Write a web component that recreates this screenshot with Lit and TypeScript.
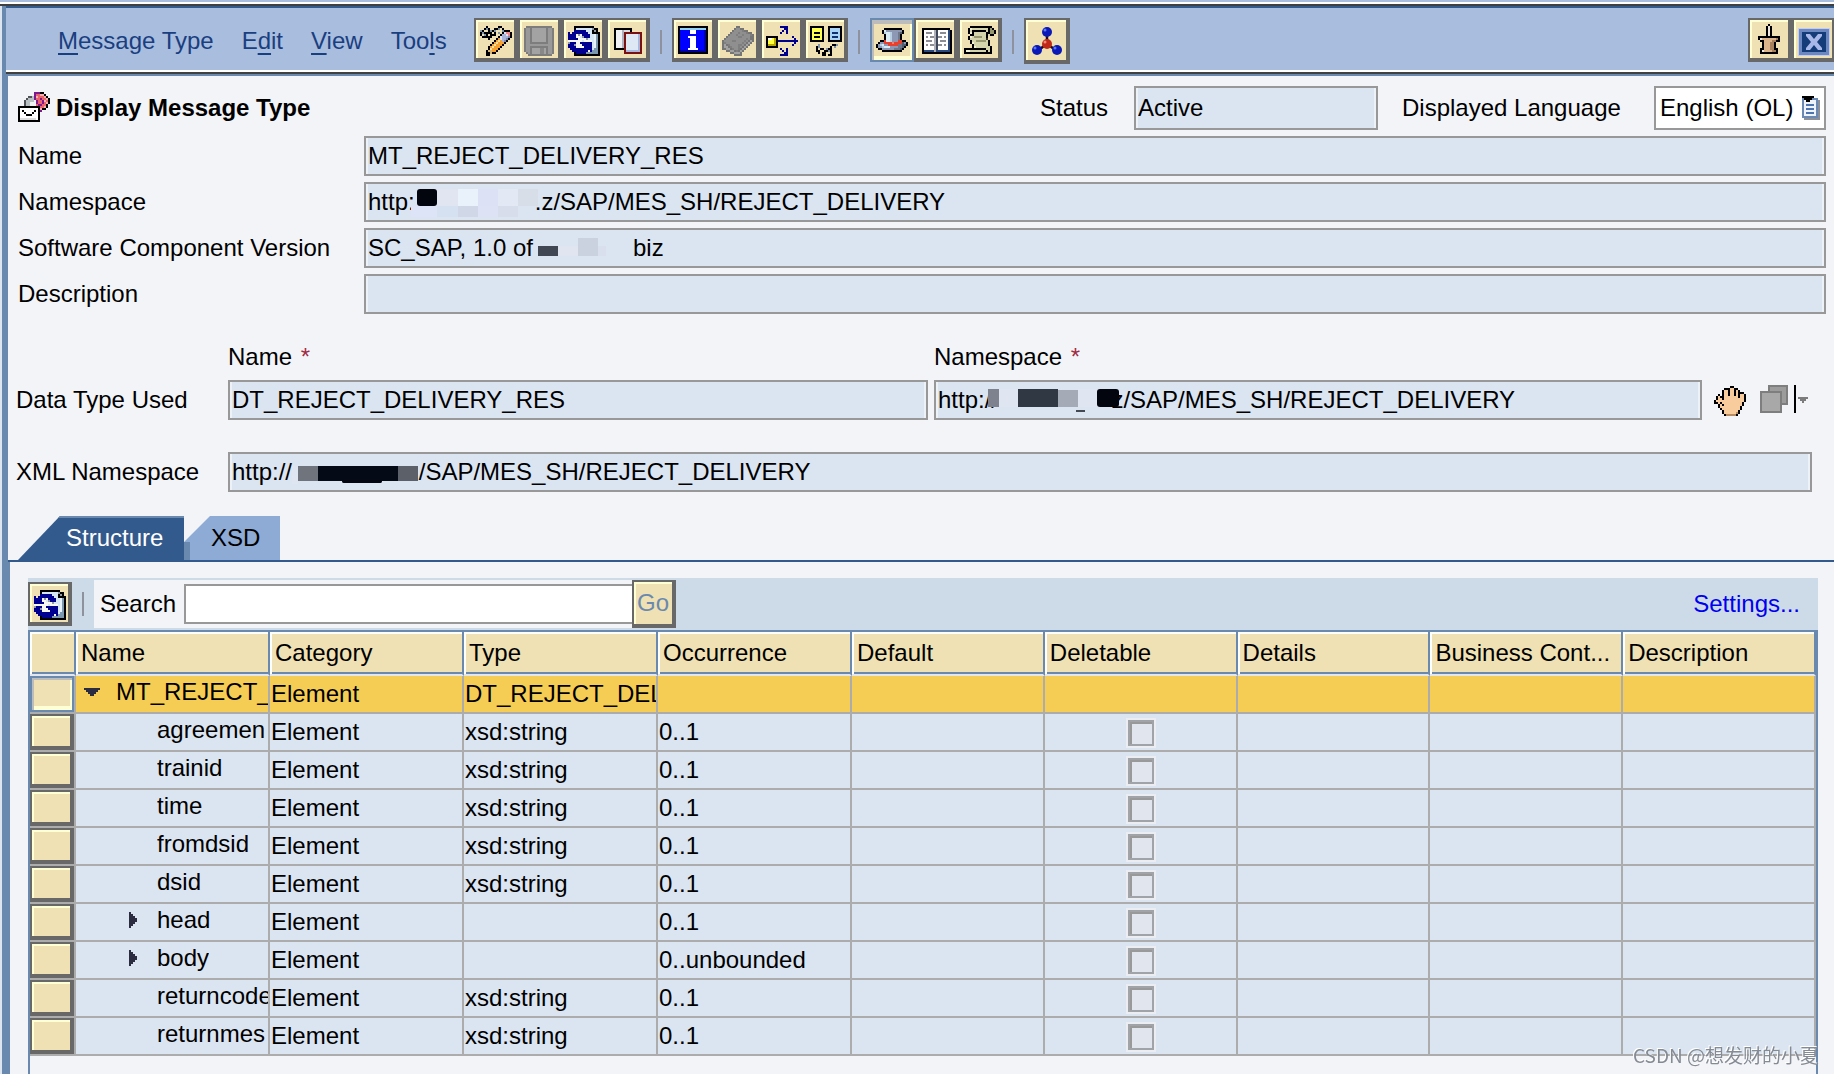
import { LitElement, html, svg, css, nothing, TemplateResult } from "lit";
import { customElement, state } from "lit/decorators.js";

type Palette = Record<string, string>;

/* Turns rows of palette letters into runs of square cells. */
const cells = (rows: string[], palette: Palette) => {
  const out: TemplateResult[] = [];
  rows.forEach((row, y) => {
    let x = 0;
    while (x < row.length) {
      const c = row[x];
      let n = 1;
      while (row[x + n] === c) n++;
      if (palette[c]) out.push(svg`<rect x=${x} y=${y} width=${n} height="1" fill=${palette[c]}></rect>`);
      x += n;
    }
  });
  return out;
};

const pix = (body: unknown, w = 16, h = 16) => html`<svg
  class="pix" width=${w * 2} height=${h * 2} viewBox="0 0 ${w} ${h}" aria-hidden="true">${body}</svg>`;

const K = "#000000";

const icons: Record<string, () => TemplateResult> = {
  edit: () => pix(cells([
    "................",
    "...K.....KK.....",
    "..KgK..KKg.K....",
    "gK..KgKg...gKKK.",
    "KgKKKK.K.g.KwPPK",
    "K.gK.KKK..KsswPK",
    ".KKKKK...KwsssbK",
    "....K...KOwssbK.",
    ".......KOyOsbK..",
    "......KOyOOOK...",
    ".....KOyOOOK....",
    "....KOyOOOK.....",
    "....KyOOOK......",
    "...KeeOOK.......",
    "...KKeKK........",
    "...KK...........",
  ], { K, g: "#7d93ab", P: "#f2868a", w: "#dfe4f5", s: "#aab4d8", b: "#7d88b4", O: "#f5a032", y: "#ffe0a0", e: "#d8b878" })),

  save: () => pix(svg`
    <path d="M1 1H14V2H15V15H14V16H2V15H1V14H0V2H1Z" fill="#7d7d7d"></path>
    <path d="M1 2H3V10H12V2H14V15H12V11H3V15H2V14H1Z" fill="#999999"></path>
    <rect x="4" y="2" width="7" height="7" fill="#a3a3a3"></rect>
    <rect x="4" y="12" width="7" height="3" fill="#a3a3a3"></rect>
    <rect x="8" y="12" width="2" height="3" fill="#888888"></rect>`),

  refresh: () => pix(cells([
    "................",
    "...KKKKKKKKKK...",
    "...KLLLLLLLLgKK.",
    "...NNNNNNLLLKgK.",
    "N.NNNNNNNNLLKKKK",
    "NNNNWgWNNNNLLwbK",
    "NNNNWWLgNNNLLwbK",
    "NNNNNWWWWgLLLwbK",
    "WWWWWWWLWWWWLwbK",
    "gNNNWWNNNNNNLwbK",
    "NNNgWWWNNNNNLwbK",
    "NNNNWWWWNNNNLwbK",
    ".NNNNNNNNNNNLbbK",
    "..NNNNNNNNWNbbbK",
    "...KNNNNNbbbbbbK",
    "...KKKKKKKKKKKKK",
  ], { K, L: "#d5e6f6", g: "#8f9aa6", N: "#000090", W: "#f6f6f2", w: "#e8f0f8", b: "#7c97b0" })),

  copy: () => pix(svg`
    <rect x="1" y="2" width="9" height="11" fill="#000"></rect>
    <rect x="2" y="3" width="7" height="9" fill="#dcdce6"></rect>
    <rect x="2" y="3" width="3" height="9" fill="#f0f0f4"></rect>
    <rect x="5" y="3" width="1" height="9" fill="#b0b0c0"></rect>
    <rect x="6" y="4" width="9" height="11" fill="#7b1010"></rect>
    <rect x="7" y="5" width="7" height="9" fill="#a9b8dc"></rect>
    <rect x="7" y="5" width="6" height="8" fill="#dde8f4"></rect>`),

  info: () => pix(svg`
    <rect x="0" y="1" width="15" height="14" fill="#000"></rect>
    <rect x="1" y="2" width="13" height="1" fill="#8fd4f6"></rect>
    <rect x="1" y="3" width="13" height="11" fill="#0000a0"></rect>
    <rect x="1" y="3" width="12" height="10" fill="#0000ff"></rect>
    <path d="M6 3H9V5H6Z M5 6H9V12H10V13H5V12H6V7H5Z" fill="#fff"></path>`),

  book: () => pix(cells([
    "................",
    ".......dd.......",
    "......dggdd.....",
    ".....dggggmdd...",
    "....dgggmgggmdd.",
    "...dgggmggmgggmd",
    "..dgggggmmggggdd",
    ".dggggggggggmgdd",
    "dggggmmggggmgdld",
    "dmggggggggmgdld.",
    "dldmggggmmgdld..",
    "dlldmgggmgdld...",
    "ddlldmggmdld....",
    "..ddlldmdld.....",
    "....ddllld......",
    "......dddd......",
  ], { d: "#757575", g: "#8f8f8f", m: "#7f7f7f", l: "#a2a2a2" })),

  where: () => pix(svg`
    <rect x="0" y="6" width="6" height="6" fill="#000"></rect>
    <rect x="1" y="7" width="4" height="4" fill="#b8a800"></rect>
    <rect x="1" y="7" width="3" height="3" fill="#ffff3c"></rect>
    <rect x="1" y="7" width="2" height="1" fill="#fff"></rect>
    <path d="M6 8H16V9H6Z M13 6H14V7H15V8H16V9H15V10H14V11H13V10H14V9H13V8H14V7H13Z
      M7 1H11V5H10V3H9V4H8V5H7V4H8V3H9V2H7Z
      M7 12H8V13H9V14H10V12H11V16H7V15H9V14H8V13H7Z" fill="#000090"></path>`),

  compare: () => pix(svg`
    <rect x="0" y="1" width="7" height="8" fill="#000"></rect>
    <rect x="1" y="2" width="5" height="6" fill="#ffff50"></rect>
    <path d="M2 4H5V5H2Z M2 6H5V7H2Z" fill="#000"></path>
    <rect x="9" y="1" width="7" height="8" fill="#000"></rect>
    <rect x="10" y="2" width="5" height="6" fill="#a8d4f8"></rect>
    <path d="M11 4H14V5H11Z M11 6H14V7H11Z" fill="#103070"></path>
    ${cells([
      "................", "................", "................", "................",
      "................", "................", "................", "................",
      "................", "................",
      "....g......KKg..", "...Kg.....K.g...", "...K.KK.gKK.....",
      "...KK..KKgK.....", "....K.KK..K.....", "......KK.KK.....",
    ], { K, g: "#7d93ab" })}`),

  hat: () => pix(cells([
    "................",
    "................",
    "....KKKKKKKKK...",
    "...KwggggggggK..",
    "...KbwwbgggdsK..",
    "....KwwbgggdK...",
    "....KwwbgggdK...",
    "....KwwbgggdK...",
    "..KKRwwbgggRRKK.",
    ".KggRRRRrRRRRsgK",
    "KgbwggRRRRRddssK",
    "KggbwwwggggddsK.",
    ".KKggggggdddsK..",
    "...KKKKKKKKKK...",
  ], { K, w: "#d8ecf6", b: "#b8d0e4", g: "#8c98b4", d: "#70788c", s: "#525c70", R: "#e8402c", r: "#f08070" })),

  pages: () => pix(svg`
    <path d="M1 2H15V3H16V15H1Z" fill="#000"></path>
    <rect x="14" y="3" width="1" height="11" fill="#284880"></rect>
    <rect x="2" y="13" width="12" height="1" fill="#284880"></rect>
    <rect x="2" y="3" width="12" height="10" fill="#fff"></rect>
    <rect x="7" y="3" width="1" height="11" fill="#b0b0b8"></rect>
    <rect x="8" y="3" width="1" height="10" fill="#40485c"></rect>
    <path d="M3 4H6V5H3Z M3 6H4V7H3Z M5 6H7V7H5Z M3 8H6V9H3Z M3 10H4V11H3Z M5 10H7V11H5Z
      M10 4H13V5H10Z M9 6H11V7H9Z M12 6H13V7H12Z M10 8H13V9H10Z M9 10H11V11H9Z M12 10H13V11H12Z" fill="#8c8c94"></path>`),

  scroll: () => pix(cells([
    "................",
    "...KKKKKKKKKKK..",
    "..KwllllllllKdK.",
    "..KlKKKKKKKlKddK",
    "..KwKllllllKKddK",
    "...KKllllllKlKK.",
    "..KwlddddllK....",
    "..Kllllllllk....",
    "...KlldddddlK...",
    "...KwlllllllK...",
    "....KlllllllK...",
    "....KwlllllllK..",
    "KKKKKKKKKKKllK..",
    "KwwllllllllKlK..",
    "KKKKKKKKKKKKKK..",
    "................",
  ], { K, k: "#2c2c20", w: "#f2f2d4", l: "#d4d4ac", d: "#989870" })),

  molecule: () => html`<svg width="32" height="32" viewBox="0 0 32 32" aria-hidden="true">
    <path d="M16 7V19L6 26M16 19L26 26" stroke="#181010" stroke-width="2.5" fill="none"></path>
    <g fill="#0a18b8"><circle cx="16" cy="7" r="5"></circle><circle cx="6" cy="25" r="5"></circle><circle cx="26" cy="25" r="5"></circle></g>
    <g fill="#5c78f0"><circle cx="14" cy="5" r="1.5"></circle><circle cx="4" cy="23" r="1.5"></circle><circle cx="24" cy="23" r="1.5"></circle></g>
    <circle cx="16" cy="19" r="5" fill="#c02818"></circle><circle cx="14" cy="17" r="1.5" fill="#f08878"></circle></svg>`,

  pin: () => pix(cells([
    ".......K........",
    "......KwK.......",
    "......KwK.......",
    "......KwK.......",
    "......KwK.......",
    "......KwK.......",
    "..KKKKKKKKKKK...",
    "..KwtttttttbK...",
    "...KKttttbbKK...",
    "....KtttbbK.....",
    "....KtttbbK.....",
    "....KtttbbK.....",
    "...KKtttbbKK....",
    "...KwttttbbK....",
    "...KKKKKKKKK....",
  ], { K, w: "#f0e8e0", t: "#dcb48c", b: "#a8825c" })),

  close: () => html`<svg width="32" height="32" viewBox="0 0 32 32" aria-hidden="true">
    <rect x="0" y="4" width="32" height="28" fill="#c4ccf4"></rect>
    <rect x="1" y="5" width="30" height="26" fill="#6c88c0"></rect>
    <rect x="4" y="8" width="24" height="20" fill="#143c78"></rect>
    <path d="M8 10h4l4 5l4-5h4v2l-5 6l5 6v2h-4l-4-5l-4 5h-4v-2l5-6l-5-6z" fill="#a8b8e8"></path></svg>`,

  message: () => pix(cells([
    "........PPPKK...",
    "........PRRrrK..",
    ".....ggLPrRRRrK.",
    "....gLLLPRRPRRrK",
    "...gLLLLWPRRPrRK",
    "...gLLWWWPRRPRrK",
    "...gLLWWWRPPRRK.",
    "KKKKKKKKKKKRRrK.",
    "KwwwwwwwwwKrKK..",
    "KwKwwwwwKwKP....",
    "KwwKwwwKwwK.....",
    "KwwwKKKwwwK.....",
    "KwwwwwwwwwK.....",
    "KccccccccwK.....",
    "KKKKKKKKKKK.....",
  ], { K, P: "#7c1890", R: "#e86468", r: "#f4b0b0", g: "#505458", L: "#b8c0c4", W: "#eef2f2", w: "#ffffff", c: "#dcdcdc" })),

  hand: () => pix(cells([
    "................",
    "........KK......",
    ".....KKKppKK....",
    "....KppKppKpK...",
    "....KppKppKpKKK.",
    "..K.KppKppKpKppK",
    ".KpKKpppppppKppK",
    ".KppKppppppppppK",
    "KppppppppppppppK",
    "KKpKppppppppppK.",
    "..KpKpppppppppK.",
    "..KppppppppppK..",
    "...KpppppppppK..",
    "....KpppppppK...",
    "....KppppppbK...",
    ".....KbbbbbK....",
  ], { K, p: "#f8cc9c", b: "#b88c60" })),

  stack: () => html`<svg class="pix" width="48" height="30" viewBox="0 0 48 30" aria-hidden="true">
    <rect x="8" y="0" width="20" height="20" fill="#7e7e7e"></rect><rect x="10" y="2" width="16" height="16" fill="#9c9c9c"></rect>
    <rect x="0" y="6" width="22" height="22" fill="#7e7e7e"></rect><rect x="2" y="8" width="18" height="18" fill="#a8a8a8"></rect>
    <rect x="34" y="0" width="2" height="28" fill="#000"></rect>
    <path d="M38 12H48V14H46V16H44V18H42V16H40V14H38Z" fill="#7c7c7c"></path></svg>`,

  list: () => html`<svg class="pix" width="20" height="24" viewBox="0 0 20 24" aria-hidden="true">
    <rect x="4" y="4" width="16" height="20" fill="#8c9098"></rect>
    <rect x="2" y="2" width="16" height="20" fill="#6a89b4"></rect>
    <rect x="4" y="4" width="12" height="16" fill="#f0f4fa"></rect>
    <path d="M6 8H14V10H6Z M6 12H14V14H6Z M6 16H14V18H6Z" fill="#4c74b0"></path>
    <path d="M2 0H14V2H12V4H10V6H6V4H4V2H2Z" fill="#000"></path></svg>`,
};

/* Redaction blocks: x, y, width, height, colour, in the field's own pixels. */
type Block = [number, number, number, number, string];
const redact = (blocks: Block[]) => html`<svg class="redact" width="240" height="36" viewBox="0 0 240 36" aria-hidden="true">
  ${blocks.map(([x, y, w, h, f]) => svg`<rect x=${x} y=${y} width=${w} height=${h} rx=${f === "#02040e" ? 3 : 0} fill=${f}></rect>`)}</svg>`;

const gap = (n: number) => " ".repeat(n);

const general: { label: string; id: string; value: string; blocks?: Block[] }[] = [
  { label: "Name", id: "name", value: "MT_REJECT_DELIVERY_RES" },
  {
    label: "Namespace", id: "ns", value: `http:${gap(18)}.z/SAP/MES_SH/REJECT_DELIVERY`,
    blocks: [
      [45, 22, 26, 11, "#dde4f7"], [51, 5, 20, 17, "#02040e"], [71, 5, 21, 17, "#e1e5f2"], [92, 5, 20, 17, "#e9f1fb"],
      [112, 5, 20, 17, "#dde1f5"], [132, 5, 20, 17, "#e3e8f5"], [152, 5, 20, 17, "#d8dee7"],
      [71, 22, 21, 11, "#d5e1f0"], [92, 22, 20, 11, "#d0d8e8"], [112, 22, 20, 11, "#dde3f5"], [132, 22, 20, 11, "#d8ddec"],
    ],
  },
  {
    label: "Software Component Version", id: "scv", value: `SC_SAP, 1.0 of${gap(15)}biz`,
    blocks: [
      [172, 16, 20, 10, "#414853"], [192, 16, 20, 10, "#e1e5f0"], [212, 8, 20, 18, "#c9d2de"], [232, 16, 8, 10, "#d9dfec"],
    ],
  },
  { label: "Description", id: "desc", value: "" },
];

const columns = ["Name", "Category", "Type", "Occurrence", "Default", "Deletable", "Details", "Business Cont...", "Description"];

interface Row { name: string; type: string; occ: string; level: number; twisty?: "open" | "closed" }
const rows: Row[] = [
  { name: "MT_REJECT_DELIVERY_RES", type: "DT_REJECT_DELIVERY_RES", occ: "", level: 0, twisty: "open" },
  { name: "agreemen", type: "xsd:string", occ: "0..1", level: 1 },
  { name: "trainid", type: "xsd:string", occ: "0..1", level: 1 },
  { name: "time", type: "xsd:string", occ: "0..1", level: 1 },
  { name: "fromdsid", type: "xsd:string", occ: "0..1", level: 1 },
  { name: "dsid", type: "xsd:string", occ: "0..1", level: 1 },
  { name: "head", type: "", occ: "0..1", level: 1, twisty: "closed" },
  { name: "body", type: "", occ: "0..unbounded", level: 1, twisty: "closed" },
  { name: "returncode", type: "xsd:string", occ: "0..1", level: 1 },
  { name: "returnmes", type: "xsd:string", occ: "0..1", level: 1 },
];

@customElement("app-root")
export class AppRoot extends LitElement {
  @state() private selected = 0;
  @state() private tab = "Structure";

  static styles = css`
    :host {
      display: block;
      font: 24px/28px "Liberation Sans", Arial, sans-serif;
      color: #000;
      --steel: #6a89ae;
      --deep: #335a8c;
      --sand: #efe1b4;
      --cream: #ffffd6;
      --shade: #686868;
      --paper: #f3f4f8;
      --field: #dbe5f1;
      --rule: #989898;
    }
    * { box-sizing: border-box; }
    button, input, select { font: inherit; color: inherit; margin: 0; border-radius: 0; }
    button { padding: 0; }
    svg { display: block; flex: none; }
    .pix { shape-rendering: crispEdges; }

    .app {
      min-height: 100vh;
      display: flex;
      flex-direction: column;
      background: var(--paper);
      border-top: 2px solid #a9bddf;
      overflow: hidden;
    }
    .edge { border-top: 2px solid #fff; border-bottom: 2px solid #404040; flex: none; }
    .window {
      flex: 1;
      display: flex;
      flex-direction: column;
      margin-left: 2px;
      border-left: 4px solid var(--steel);
      box-shadow: -2px 0 #dde5f0;
    }

    .bar {
      display: flex;
      align-items: flex-start;
      padding: 10px 0 6px 52px;
      background: #a9bddf;
      border-top: 2px solid var(--deep);
    }
    .menu { flex: 0 0 416px; display: flex; gap: 28px; padding-top: 9px; }
    .menu button { border: 0; background: none; color: #1a3f80; white-space: nowrap; }
    .menu u { text-underline-offset: 4px; text-decoration-thickness: 2px; }
    .tools { display: flex; }
    .spacer { flex: 1; }
    .sep { flex: none; width: 2px; height: 24px; margin: 12px 10px 0; background: #8e929c; }
    .tool {
      flex: none;
      display: flex;
      align-items: center;
      justify-content: center;
      width: 44px;
      height: 44px;
      border: solid var(--shade);
      border-width: 2px 4px 4px 2px;
      background: var(--sand);
      box-shadow: inset 2px 2px var(--cream);
    }
    .tool svg { margin: 2px 0 0 2px; }
    .tool.big { width: 46px; height: 46px; }
    .tool.on {
      border: 2px solid var(--steel);
      box-shadow: inset 2px 4px #bcbcbc, inset -2px -4px var(--cream);
    }
    .tool.on svg { margin: 0; }
    .window-tools { margin-right: -2px; }

    .body {
      flex: 1;
      display: flex;
      flex-direction: column;
      border-left: 2px solid var(--steel);
      border-top: 2px solid var(--steel);
    }
    .head { display: flex; align-items: center; height: 44px; margin: 10px 8px 6px 10px; }
    h1 { margin: 0 auto 0 6px; font-size: 24px; line-height: 28px; font-weight: bold; white-space: nowrap; }
    .head label { flex: none; white-space: nowrap; }
    .for-status { width: 94px; }
    .for-lang { width: 252px; }
    .head .status { flex: 0 1 244px; height: 44px; margin-right: 24px; }

    .field { position: relative; display: block; min-width: 0; height: 40px; }
    .field input {
      display: block;
      width: 100%;
      height: 100%;
      padding: 0 2px;
      border: 2px solid var(--rule);
      background: var(--field);
      box-shadow: inset 2px 0 #edf2f8, inset -2px 0 #edf2f8;
      outline: 0;
    }
    .redact { position: absolute; left: 2px; top: 2px; pointer-events: none; }
    .choice { position: relative; flex: 0 0 172px; height: 44px; }
    .choice select {
      appearance: none;
      width: 100%;
      height: 100%;
      padding: 0 0 0 4px;
      border: 2px solid var(--rule);
      background: #fff;
    }
    .choice svg { position: absolute; right: 6px; top: 10px; pointer-events: none; }

    .general { display: grid; grid-template-columns: 340px 1fr; gap: 6px; align-items: center; margin: 0 8px 0 10px; }
    .general label { white-space: nowrap; }
    .types {
      display: grid;
      grid-template-columns: 206px 700fr 768fr 126px;
      gap: 6px;
      align-items: center;
      margin: 26px 0 0 8px;
    }
    .types .cap { height: 34px; line-height: 34px; }
    .req { color: #a02c44; margin-left: 2px; }
    .actions { display: flex; align-items: center; gap: 14px; padding-left: 6px; }
    .actions button { border: 0; background: none; }
    .xml {
      display: grid;
      grid-template-columns: 206px 1fr;
      gap: 6px;
      align-items: center;
      margin: 32px 22px 0 8px;
    }
    .types label, .xml label { white-space: nowrap; }

    .tabs { display: flex; margin-top: 24px; padding-left: 10px; border-bottom: 2px solid var(--deep); }
    .tabs button { height: 44px; border: 0; text-align: left; }
    .tabs .first {
      width: 166px;
      padding-left: 48px;
      padding-bottom: 2px;
      color: #fff;
      background: var(--deep);
      border-top: 2px solid var(--steel);
      clip-path: polygon(42px 0, 100% 0, 100% 100%, 0 100%);
    }
    .tabs .second {
      width: 96px;
      padding-left: 27px;
      background: linear-gradient(90deg, var(--steel) 6px, #8dabd5 6px) 0 26px no-repeat, #8dabd5;
      clip-path: polygon(26px 0, 100% 0, 100% 100%, 0 100%, 0 26px);
    }

    .panel {
      flex: 1;
      display: flex;
      flex-direction: column;
      padding: 16px 16px 0 18px;
      border-left: 2px solid var(--steel);
    }
    .strip { display: flex; align-items: center; height: 52px; background: #cddbe8; }
    .strip .sep { margin: 0 10px; }
    .search { display: flex; align-items: center; height: 48px; padding-left: 6px; background: var(--paper); }
    .search label { width: 84px; }
    .search input { width: 450px; height: 40px; padding: 0 4px; border: 2px solid var(--rule); background: #fff; outline: 0; }
    .go { height: 48px; margin-left: -2px; color: var(--steel); }
    .strip a { margin-left: auto; margin-right: 18px; color: #0000f0; text-decoration: none; }

    .sheet { flex: 1; border: solid var(--steel); border-width: 2px 2px 0; }
    table { width: 100%; table-layout: fixed; border-collapse: separate; border-spacing: 0; }
    col.pick { width: 46px; }
    col.wide { width: 194px; }
    th, td { padding: 0; text-align: left; font-weight: normal; white-space: nowrap; overflow: hidden; }
    th {
      height: 44px;
      border: solid var(--steel);
      border-width: 0 2px 2px 0;
      border-bottom-color: #e4e6ee;
      padding: 0 0 0 5px;
      background: var(--sand);
      box-shadow: inset 2px 2px #fff, inset 0 -2px var(--steel);
    }
    td {
      height: 38px;
      border: solid #acacac;
      border-width: 0 2px 2px 0;
      padding-left: 1px;
      background: var(--field);
    }
    tr.sel td { background: #f6cd54; }
    td.picker, tr.sel td.picker { padding: 0; background: #cfcfcf; }
    .pickbtn {
      display: block;
      width: 44px;
      height: 36px;
      border: solid var(--shade);
      border-width: 2px 4px 4px 2px;
      background: var(--sand);
      box-shadow: inset 2px 2px var(--cream);
    }
    .sel .pickbtn {
      border: 2px solid var(--steel);
      box-shadow: inset 2px 2px #bcbcbc, inset -2px -4px var(--cream);
    }
    .node { display: flex; align-items: center; height: 36px; padding-bottom: 4px; }
    .node .slot { flex: 0 0 32px; height: 16px; }
    .node .text { min-width: 0; overflow: hidden; }
    .node button { display: block; border: 0; background: none; }
    .mid { display: flex; justify-content: center; align-items: center; }
    .mid input {
      appearance: none;
      width: 26px;
      height: 26px;
      margin: 2px 0 0;
      border: 2px solid #a0a3a8;
      background: #e1e6ee;
      box-shadow: 0 0 0 2px #ecedf3, inset 2px 2px #999;
    }
    .mark {
      position: fixed;
      right: 15px;
      bottom: 5px;
      font: 19px/28px "Noto Sans CJK SC", sans-serif;
      color: #858b94;
      text-shadow: -1px -1px #fff;
      pointer-events: none;
    }
  `;

  private tool(icon: string, label: string, cls = "") {
    return html`<button class="tool ${cls}" type="button" aria-label=${label}>${icons[icon]()}</button>`;
  }

  private field(id: string, value: string, blocks?: Block[]) {
    return html`<span class="field"><input id=${id} readonly .value=${value} />${blocks ? redact(blocks) : nothing}</span>`;
  }

  private row(r: Row, i: number) {
    return html`<tr class=${i === this.selected ? "sel" : ""}>
      <td class="picker"><button class="pickbtn" type="button" aria-label="Select row" @click=${() => (this.selected = i)}></button></td>
      <td><div class="node" style="padding-left:${7 + r.level * 41}px">
        <span class="slot">${r.twisty
          ? html`<button type="button" aria-label="Toggle"><svg class="pix" width="16" height="16" viewBox="0 0 8 8">
              <path fill="#2c2c40" d=${r.twisty === "open"
                ? "M0 2H8V3H7V4H6V5H5V6H3V5H2V4H1V3H0Z"
                : "M2 0H3V1H4V2H5V3H6V5H5V6H4V7H3V8H2Z"}></path></svg></button>`
          : nothing}</span><span class="text">${r.name}</span></div></td>
      <td>Element</td>
      <td>${r.type}</td>
      <td>${r.occ}</td>
      <td></td>
      <td>${i ? html`<div class="mid"><input type="checkbox" disabled aria-label="Deletable" /></div>` : nothing}</td>
      <td></td><td></td><td></td>
    </tr>`;
  }

  render() {
    return html`<div class="app">
      <div class="edge"></div>
      <div class="window">
        <header class="bar">
          <nav class="menu">
            <button type="button"><u>M</u>essage Type</button>
            <button type="button">E<u>d</u>it</button>
            <button type="button"><u>V</u>iew</button>
            <button type="button">Too<u>l</u>s</button>
          </nav>
          <div class="tools">
            ${this.tool("edit", "Switch between display and edit")}${this.tool("save", "Save")}
            ${this.tool("refresh", "Refresh")}${this.tool("copy", "Copy")}
            <span class="sep"></span>
            ${this.tool("info", "Information")}${this.tool("book", "Documentation")}
            ${this.tool("where", "Where-used list")}${this.tool("compare", "Compare")}
            <span class="sep"></span>
            ${this.tool("hat", "Header", "on")}${this.tool("pages", "Details")}${this.tool("scroll", "History")}
            <span class="sep"></span>
            ${this.tool("molecule", "Dependencies", "big")}
          </div>
          <span class="spacer"></span>
          <div class="tools window-tools">${this.tool("pin", "Pin")}${this.tool("close", "Close")}</div>
        </header>
        <div class="edge"></div>
        <main class="body">
          <div class="head">
            ${icons.message()}
            <h1>Display Message Type</h1>
            <label class="for-status" for="status">Status</label>
            <span class="field status"><input id="status" readonly .value=${"Active"} /></span>
            <label class="for-lang" for="lang">Displayed Language</label>
            <span class="choice"><select id="lang"><option>English (OL)</option></select>${icons.list()}</span>
          </div>
          <div class="general">
            ${general.map((f) => html`<label for=${f.id}>${f.label}</label>${this.field(f.id, f.value, f.blocks)}`)}
          </div>
          <div class="types">
            <span></span>
            <label class="cap" for="dt-name">Name <span class="req">*</span></label>
            <label class="cap" for="dt-ns">Namespace <span class="req">*</span></label>
            <span></span>
            <label for="dt-name">Data Type Used</label>
            ${this.field("dt-name", "DT_REJECT_DELIVERY_RES")}
            ${this.field("dt-ns", `http://${gap(17)}z/SAP/MES_SH/REJECT_DELIVERY`, [
              [52, 7, 11, 18, "#7d828e"], [63, 7, 19, 18, "#e0e5f2"], [82, 7, 40, 18, "#303844"],
              [122, 8, 20, 17, "#a4aab6"], [142, 7, 19, 18, "#dfe6f2"], [161, 7, 22, 18, "#02040e"], [140, 28, 9, 2, "#444a54"],
            ])}
            <div class="actions">
              <button type="button" aria-label="Select by hand">${icons.hand()}</button>
              <button type="button" aria-label="Paste options">${icons.stack()}</button>
            </div>
          </div>
          <div class="xml">
            <label for="xml-ns">XML Namespace</label>
            ${this.field("xml-ns", `http://${gap(19)}/SAP/MES_SH/REJECT_DELIVERY`, [
              [62, 12, 6, 18, "#dfe5f1"], [68, 12, 20, 15, "#70757d"], [88, 12, 80, 15, "#040a16"], [112, 26, 40, 3, "#02040e"],
              [168, 12, 20, 15, "#5c6068"],
            ])}
          </div>
          <div class="tabs" role="tablist">
            <button class="first" role="tab" aria-selected=${this.tab === "Structure"} @click=${() => (this.tab = "Structure")}>Structure</button>
            <button class="second" role="tab" aria-selected=${this.tab === "XSD"} @click=${() => (this.tab = "XSD")}>XSD</button>
          </div>
          <section class="panel">
            <div class="strip">
              ${this.tool("refresh", "Refresh structure")}
              <span class="sep"></span>
              <div class="search">
                <label for="search">Search</label>
                <input id="search" type="text" />
              </div>
              <button class="tool go" type="button">Go</button>
              <a href="#settings">Settings...</a>
            </div>
            <div class="sheet">
              <table>
                <colgroup><col class="pick" />${columns.map((_, i) => html`<col class=${i < 4 ? "wide" : ""} />`)}</colgroup>
                <thead><tr><th></th>${columns.map((c) => html`<th scope="col">${c}</th>`)}</tr></thead>
                <tbody>${rows.map((r, i) => this.row(r, i))}</tbody>
              </table>
            </div>
          </section>
        </main>
      </div>
      <div class="mark">CSDN @想发财的小夏</div>
    </div>`;
  }
}
